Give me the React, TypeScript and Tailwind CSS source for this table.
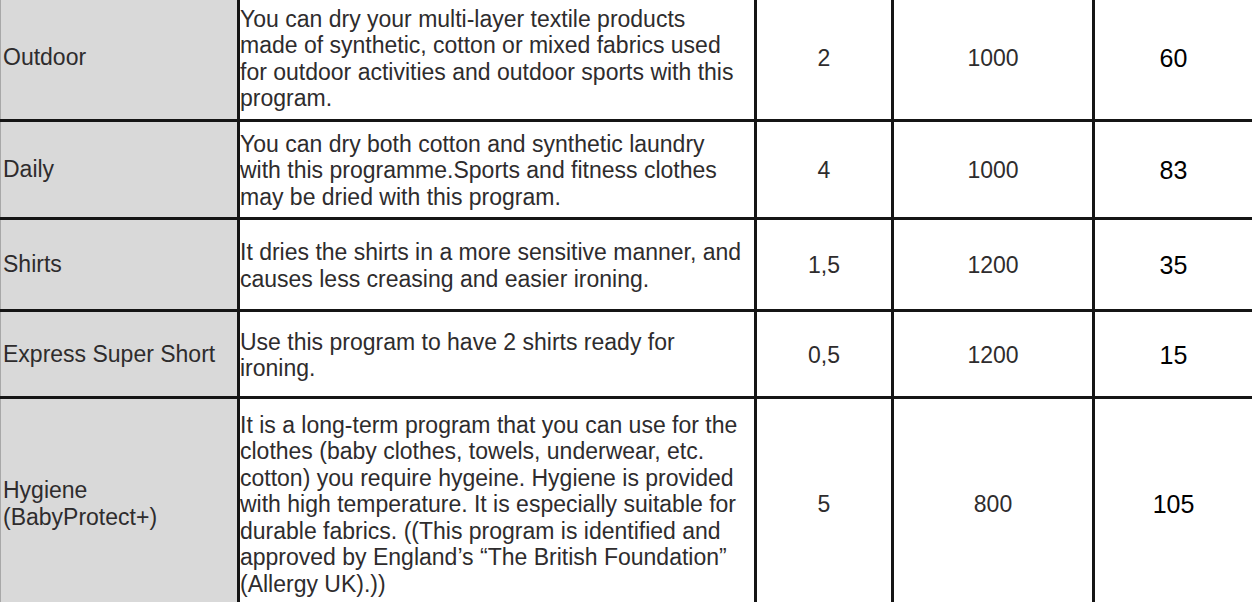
import React from 'react';

/**
 * Drying programme table (cropped view)
 */

type Row = {
  name: string[];
  desc: string[];
  load: string;
  speed: string;
  time: string;
  h: string;
};

const rows: Row[] = [
  {
    name: ['Outdoor'],
    desc: [
      'You can dry your multi-layer textile products',
      'made of synthetic, cotton or mixed fabrics used',
      'for outdoor activities and outdoor sports with this',
      'program.',
    ],
    load: '2',
    speed: '1000',
    time: '60',
    h: 'h-[126px]',
  },
  {
    name: ['Daily'],
    desc: [
      'You can dry both cotton and synthetic laundry',
      'with this programme.Sports and fitness clothes',
      'may be dried with this program.',
    ],
    load: '4',
    speed: '1000',
    time: '83',
    h: 'h-[98px]',
  },
  {
    name: ['Shirts'],
    desc: [
      'It dries the shirts in a more sensitive manner, and',
      'causes less creasing and easier ironing.',
    ],
    load: '1,5',
    speed: '1200',
    time: '35',
    h: 'h-[92px]',
  },
  {
    name: ['Express Super Short'],
    desc: ['Use this program to have 2 shirts ready for', 'ironing.'],
    load: '0,5',
    speed: '1200',
    time: '15',
    h: 'h-[87px]',
  },
  {
    name: ['Hygiene', '(BabyProtect+)'],
    desc: [
      'It is a long-term program that you can use for the',
      'clothes (baby clothes, towels, underwear, etc.',
      'cotton) you require hygeine. Hygiene is provided',
      'with high temperature. It is especially suitable for',
      'durable fabrics. ((This program is identified and',
      'approved by England\u2019s \u201cThe British Foundation\u201d',
      '(Allergy UK).))',
    ],
    load: '5',
    speed: '800',
    time: '105',
    h: 'h-[212px]',
  },
];

export function ProgramTable() {
  return (
    <div className="w-[1252px] h-[602px] overflow-hidden bg-white text-[#2e2c2d] text-[23px] leading-[26.5px] [font-family:'Liberation_Sans',Arial,sans-serif]">
      <div className="-mt-[4px]">
        {rows.map((r, i) => (
          <div key={i} className={`flex border-b-[3px] border-[#151515] ${r.h}`}>
            <div className="w-[237px] shrink-0 bg-[#d9d9d9] border-l border-[#a8a8a8] pl-[2px] flex flex-col justify-center">
              {r.name.map((l, j) => (
                <span key={j} className="whitespace-nowrap">{l}</span>
              ))}
            </div>
            <div className="w-[517px] shrink-0 border-l-[3px] border-[#151515] pt-[2px] flex flex-col justify-center">
              {r.desc.map((l, j) => (
                <span key={j} className="whitespace-nowrap">{l}</span>
              ))}
            </div>
            <div className="w-[137px] shrink-0 border-l-[3px] border-[#151515] pt-[2px] flex items-center justify-center">
              {r.load}
            </div>
            <div className="w-[201px] shrink-0 border-l-[3px] border-[#151515] pt-[2px] flex items-center justify-center">
              {r.speed}
            </div>
            <div className="flex-1 border-l-[3px] border-[#151515] pt-[2px] flex items-center justify-center text-black text-[25px]">
              {r.time}
            </div>
          </div>
        ))}
      </div>
    </div>
  );
}

export default ProgramTable;
